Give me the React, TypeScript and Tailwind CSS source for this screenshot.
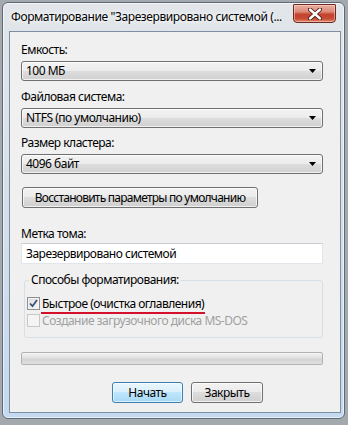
import React from "react";

const FONT = { fontFamily: '"Noto Sans", "Segoe UI", Arial, sans-serif' };

function Combo({ text }: { text: string }) {
  return (
    <div className="relative flex h-[20px] w-[302px] items-center rounded-[3px] border border-[#707070] bg-[linear-gradient(to_bottom,#f3f3f3_0%,#ebebeb_50%,#dddddd_51%,#d0d0d0_100%)] pl-[4px] shadow-[inset_0_0_0_1px_rgba(255,255,255,0.7)]">
      <span className="whitespace-nowrap leading-[16px] text-black">{text}</span>
      <svg className="absolute right-[6px] top-[7px]" width="7" height="4" viewBox="0 0 7 4">
        <path d="M0 0 H7 L3.5 4 Z" fill="#000" />
      </svg>
    </div>
  );
}

function Label({ text, className = "" }: { text: string; className?: string }) {
  return <div className={`h-[16px] whitespace-nowrap leading-[16px] text-black ${className}`}>{text}</div>;
}

function Button({ text, w, primary = false, tight = false }: { text: string; w: number; primary?: boolean; tight?: boolean }) {
  return (
    <div
      className={
        primary
          ? "flex h-[21px] items-center justify-center rounded-[3px] border border-[#3c7fb1] bg-[linear-gradient(to_bottom,#eaf6fd_0%,#d9f0fc_45%,#bee6fd_50%,#a7d9f5_100%)] shadow-[inset_0_0_0_1px_rgba(255,255,255,0.6)] text-black"
          : "flex h-[21px] items-center justify-center rounded-[3px] border border-[#707070] bg-[linear-gradient(to_bottom,#f2f2f2_0%,#ebebeb_45%,#dddddd_50%,#cfcfcf_100%)] shadow-[inset_0_0_0_1px_rgba(255,255,255,0.7)] text-black"
      }
      style={{ width: w }}
    >
      <span className={tight ? "whitespace-nowrap leading-[16px] tracking-[-0.75px]" : "whitespace-nowrap leading-[16px]"}>{text}</span>
    </div>
  );
}

export default function App() {
  return (
    <div className="h-[425px] w-[348px] overflow-hidden bg-[#a4a9ae] pl-[2px] pt-[2px] text-[12px] tracking-[-0.5px]" style={FONT}>
      <div className="flex h-[417px] w-[343px] flex-col rounded-[6px] border border-[#5d6b78] bg-[linear-gradient(to_bottom,#e2e6ea_0%,#d8e0e8_40%,#c4d9ef_100%)] shadow-[inset_0_0_0_1px_rgba(255,255,255,0.6)]">
        {/* Title bar */}
        <div className="flex h-[28px] items-start">
          <div className="ml-[8px] mt-[6px] h-[16px] whitespace-nowrap leading-[16px] tracking-[-0.4px] text-black [text-shadow:0_0_6px_#fff,0_0_3px_#fff]">
            Форматирование "Зарезервировано системой (...
          </div>
          <div className="ml-auto mr-[8px] mt-[1px] flex h-[19px] w-[43px] shrink-0 items-center justify-center rounded-b-[4px] rounded-t-[1px] border border-[#6e2a20] bg-[linear-gradient(to_bottom,#eab0a3_0%,#dc8a78_40%,#c4432d_55%,#c84b33_80%,#e08a6e_100%)] shadow-[inset_0_0_0_1px_rgba(255,220,210,0.5)]">
            <svg width="14" height="12" viewBox="0 0 14 12">
              <path d="M2 1.5 L12 10.5 M12 1.5 L2 10.5" stroke="#4a1a12" strokeWidth="4.2" strokeLinecap="round" />
              <path d="M2 1.5 L12 10.5 M12 1.5 L2 10.5" stroke="#ffffff" strokeWidth="2.4" strokeLinecap="round" />
            </svg>
          </div>
        </div>

        {/* Client area */}
        <div className="ml-[6px] flex h-[382px] w-[332px] flex-col border border-[#7d8fa1] bg-[#f0f0f0] pl-[11px] pt-[10px]">
          <Label text="Емкость:" />
          <div className="mt-[3px]">
            <Combo text="100 МБ" />
          </div>
          <Label text="Файловая система:" className="mt-[8px]" />
          <div className="mt-[3px]">
            <Combo text="NTFS (по умолчанию)" />
          </div>
          <Label text="Размер кластера:" className="mt-[7px]" />
          <div className="mt-[3px]">
            <Combo text="4096 байт" />
          </div>
          <div className="ml-[1px] mt-[13px]">
            <Button text="Восстановить параметры по умолчанию" w={236} tight />
          </div>
          <Label text="Метка тома:" className="mt-[18px]" />
          <div className="mt-[1px] flex h-[21px] w-[302px] items-center border border-[#e2e6ea] border-t-[#c8ccd2] bg-white pl-[4px]">
            <span className="whitespace-nowrap leading-[16px] text-black">Зарезервировано системой</span>
          </div>

          {/* Group box */}
          <div className="relative ml-[3px] mt-[16px] h-[58px] w-[299px] rounded-[3px] border border-[#d5dfe5] pl-[2px] pt-[16px]">
            <div className="absolute left-[4px] top-[-9px] whitespace-nowrap bg-[#f0f0f0] px-[2px] leading-[16px] text-black">
              Способы форматирования:
            </div>
            <div className="flex h-[13px] items-center">
              <div className="flex h-[13px] w-[13px] items-center justify-center border border-[#8e8f8f] bg-[linear-gradient(135deg,#dcdcdc_0%,#f8f8f8_100%)] shadow-[inset_0_0_0_1px_#f4f4f4]">
                <svg width="9" height="9" viewBox="0 0 9 9">
                  <path d="M1 4.5 L3.5 7.2 L8 1" stroke="#3c4f7a" strokeWidth="1.8" fill="none" />
                </svg>
              </div>
              <div className="relative ml-[2px] whitespace-nowrap leading-[16px] text-black">
                Быстрое (очистка оглавления)
                <div className="absolute bottom-[-2px] left-[-1px] right-[-1px] h-[2px] bg-[#d4102a]" />
              </div>
            </div>
            <div className="mt-[4px] flex h-[13px] items-center">
              <div className="h-[13px] w-[13px] border border-[#c8c8c8] bg-[#f4f4f4]" />
              <div className="ml-[2px] whitespace-nowrap leading-[16px] text-[#a0a0a0]">Создание загрузочного диска MS-DOS</div>
            </div>
          </div>

          {/* Progress bar */}
          <div className="mt-[14px] h-[13px] w-[302px] rounded-[2px] border border-[#b2b2b2] bg-[linear-gradient(to_bottom,#f4f4f4_0%,#e2e2e2_40%,#d4d4d4_60%,#e0e0e0_100%)]" />

          {/* Bottom buttons */}
          <div className="ml-[91px] mt-[17px] flex gap-[8px]">
            <Button text="Начать" w={71} primary />
            <Button text="Закрыть" w={72} />
          </div>
        </div>
      </div>
    </div>
  );
}
